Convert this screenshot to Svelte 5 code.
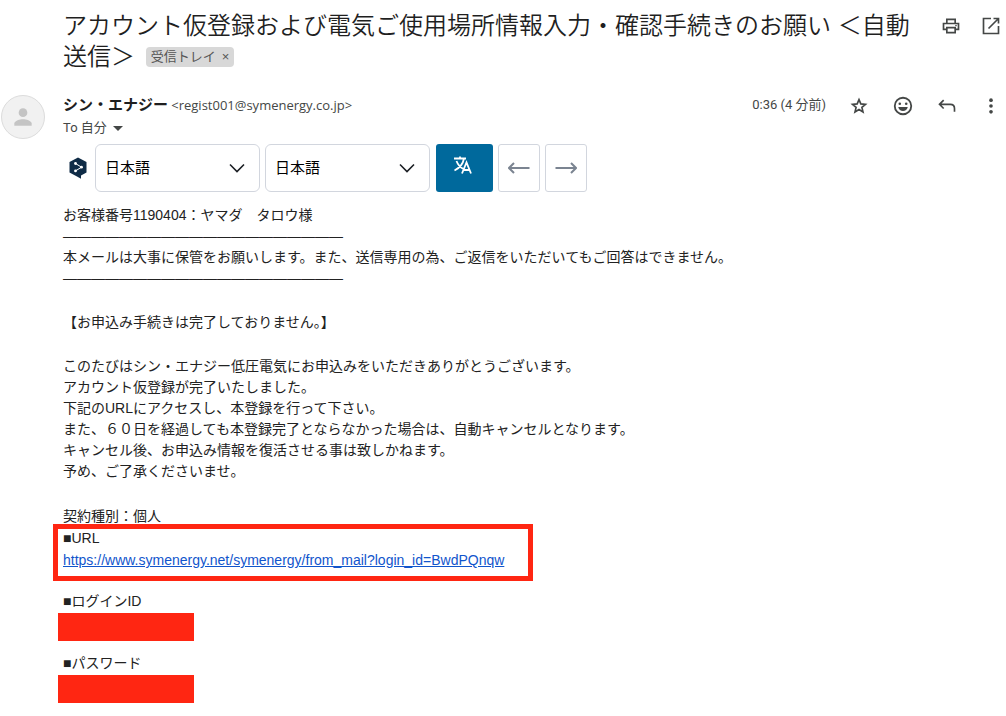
<script>
    let source = "ja";
    let target = "ja";

    const languages = [
        { code: "ja", name: "日本語" },
        { code: "en", name: "英語" },
        { code: "zh", name: "中国語" },
    ];

    const rule = "―".repeat(20);

    // Une liste de lignes par paragraphe
    const paragraphs = [
        [
            "お客様番号1190404：ヤマダ　タロウ様",
            rule,
            "本メールは大事に保管をお願いします。また、送信専用の為、ご返信をいただいてもご回答はできません。",
            rule,
        ],
        ["【お申込み手続きは完了しておりません。】"],
        [
            "このたびはシン・エナジー低圧電気にお申込みをいただきありがとうございます。",
            "アカウント仮登録が完了いたしました。",
            "下記のURLにアクセスし、本登録を行って下さい。",
            "また、６０日を経過しても本登録完了とならなかった場合は、自動キャンセルとなります。",
            "キャンセル後、お申込み情報を復活させる事は致しかねます。",
            "予め、ご了承くださいませ。",
        ],
    ];

    const url = "https://www.symenergy.net/symenergy/from_mail?login_id=BwdPQnqw";
</script>

<main>
    <header class="subject">
        <div class="title">
            <h1>アカウント仮登録および電気ご使用場所情報入力・確認手続きのお願い ＜自動送信＞</h1>
            <div class="tag"><span>受信トレイ</span><button aria-label="ラベルを削除">×</button></div>
        </div>
        <div class="actions">
            <button aria-label="印刷">
                <svg viewBox="0 0 24 24"><path d="M18 8V3H6v5H2v9h4v4h12v-4h4V8h-4zM8 5h8v3H8V5zm8 14H8v-4h8v4zm4-4h-2v-2H6v2H4v-5h16v5z" /><circle cx="18" cy="11.500" r="1" /></svg>
            </button>
            <button aria-label="新しいウィンドウで開く">
                <svg viewBox="0 0 24 24"><path class="line" d="M12 3H3v18h18v-9M15 3h6v6M21 3L9 15" /></svg>
            </button>
        </div>
    </header>

    <article>
        <div class="avatar">
            <svg viewBox="0 0 24 24"><circle cx="12" cy="8" r="4" /><path d="M12 14c-2.670 0-8 1.340-8 4v2h16v-2c0-2.660-5.330-4-8-4z" /></svg>
        </div>

        <div class="content">
            <div class="sender">
                <div class="from">
                    <div><b>シン・エナジー</b> <span class="mail">&lt;regist001@symenergy.co.jp&gt;</span></div>
                    <button class="to">To 自分 <i></i></button>
                </div>
                <time>0:36 (4 分前)</time>
                <div class="actions">
                    <button aria-label="スター">
                        <svg viewBox="0 0 24 24"><path class="line" d="M12 4.300l2.200 5.200 5.600.5-4.300 3.700 1.300 5.500-4.800-2.900-4.800 2.900 1.300-5.500L4.200 10l5.600-.5z" /></svg>
                    </button>
                    <button aria-label="リアクションを追加">
                        <svg class="big" viewBox="0 0 24 24"><circle class="line" cx="12" cy="12" r="9" /><circle cx="8.500" cy="9.500" r="1.400" /><circle cx="15.500" cy="9.500" r="1.400" /><path d="M6.800 13.200h10.400c-.6 2.700-2.700 4.300-5.200 4.300s-4.600-1.600-5.200-4.300z" /></svg>
                    </button>
                    <button aria-label="返信">
                        <svg viewBox="0 0 24 24"><path class="line" d="M8 5L3 10l5 5M3 10h13c3 0 5 2 5 5v4" /></svg>
                    </button>
                    <button aria-label="その他">
                        <svg viewBox="0 0 24 24"><circle cx="12" cy="5" r="2.200" /><circle cx="12" cy="12" r="2.200" /><circle cx="12" cy="19" r="2.200" /></svg>
                    </button>
                </div>
            </div>

            <div class="translate">
                <svg class="logo" viewBox="0 0 18 22"><path class="hex" d="M9 0.500L17.500 5v10.500L12 18.500v3.200L8 19.500.5 15.500V5z" /><path class="net" d="M6.500 6.500l6 3.700-6 3.700" /><circle cx="6.500" cy="6.500" r="1.400" /><circle cx="12.500" cy="10.200" r="1.400" /><circle cx="6.500" cy="13.900" r="1.400" /></svg>
                <label>
                    <select aria-label="原文の言語" bind:value={source}>
                        {#each languages as l}
                            <option value={l.code}>{l.name}</option>
                        {/each}
                    </select>
                    <svg viewBox="0 0 16 10"><path d="M1 1.500l7 7 7-7" /></svg>
                </label>
                <label>
                    <select aria-label="訳文の言語" bind:value={target}>
                        {#each languages as l}
                            <option value={l.code}>{l.name}</option>
                        {/each}
                    </select>
                    <svg viewBox="0 0 16 10"><path d="M1 1.500l7 7 7-7" /></svg>
                </label>
                <button class="run" aria-label="翻訳">
                    <svg viewBox="0 0 18 18"><path d="M0 2.500h12M6 0.500v2M2.500 5c1.500 4 4 6.500 7 8M10 2.500C9 8 5.500 12 .5 14.500M8 17.500l4.500-11 4.500 11M9.500 14h6" /></svg>
                </button>
                <button class="arrow" aria-label="戻る">
                    <svg viewBox="0 0 22 12"><path d="M21.500 6H1M6 1L1 6l5 5" /></svg>
                </button>
                <button class="arrow" aria-label="進む">
                    <svg viewBox="0 0 22 12"><path d="M.5 6H21M16 1l5 5-5 5" /></svg>
                </button>
            </div>

            <div class="body">
                {#each paragraphs as lines}
                    <p>
                        {#each lines as line}
                            {line}<br />
                        {/each}
                    </p>
                {/each}
                <p class="marked">
                    契約種別：個人<br />
                    ■URL<br />
                    <a href={url}>{url}</a>
                    <span class="frame"></span>
                </p>
                <p>■ログインID</p>
                <div class="hidden"></div>
                <p>■パスワード</p>
                <div class="hidden"></div>
            </div>
        </div>
    </article>
</main>

<style>
    :global(body) {
        background: #fff;
        color: #202124;
        font-family: "Liberation Sans", "Noto Sans CJK JP", sans-serif;
    }
    main {
        padding: 10px 3px 10px 0;
    }
    button {
        padding: 0;
        border: none;
        background: none;
        color: inherit;
        font: inherit;
        cursor: pointer;
    }
    svg {
        display: block;
        flex: none;
        width: 20px;
        height: 20px;
        fill: #444746;
    }
    .big {
        width: 22px;
        height: 22px;
    }
    .line {
        fill: none;
        stroke: #444746;
        stroke-width: 2;
    }
    .subject {
        display: flex;
        align-items: flex-start;
        justify-content: space-between;
        gap: 20px;
        padding-left: 63px;
    }
    .title {
        line-height: 31px;
        font-size: 24px;
    }
    h1 {
        display: inline;
        margin: 0;
        font-size: 24px;
        font-weight: 350;
        color: #1f1f1f;
    }
    .tag {
        display: inline-flex;
        align-items: center;
        gap: 6px;
        height: 20px;
        margin: 6px 0 0 4px;
        padding: 0 5px;
        border-radius: 4px;
        background: #d8d8d8;
        color: #555;
        font-size: 13px;
        line-height: 20px;
        vertical-align: top;
    }
    .actions {
        display: flex;
        gap: 20px;
    }
    .subject .actions {
        gap: 16px;
    }
    .actions button {
        display: flex;
        align-items: center;
        justify-content: center;
        width: 24px;
        height: 32px;
    }
    article {
        display: flex;
        margin-top: 23px;
    }
    .avatar {
        display: flex;
        align-items: center;
        justify-content: center;
        flex: none;
        box-sizing: border-box;
        width: 44px;
        height: 44px;
        margin: 0 18px 0 1px;
        border: 1px solid #dcdcdc;
        border-radius: 50%;
        background: #f1f1f1;
    }
    .avatar svg {
        width: 26px;
        height: 26px;
        fill: #c4c4c4;
    }
    .content {
        flex: 1;
        min-width: 0;
    }
    .sender {
        display: flex;
        align-items: flex-start;
        height: 44px;
        line-height: 20px;
        font-family: Roboto, "Noto Sans CJK JP", sans-serif;
        font-size: 13px;
        color: #444746;
    }
    .from {
        flex: 1;
    }
    b {
        font-size: 15px;
        color: #1f1f1f;
    }
    .mail {
        font-family: "Open Sans", sans-serif;
    }
    .to {
        display: flex;
        align-items: center;
        gap: 6px;
        height: 24px;
    }
    .to i {
        border: 5px solid transparent;
        border-top-color: #444746;
        border-bottom: none;
    }
    time {
        margin-right: 21px;
    }
    .sender .actions button {
        height: 22px;
    }
    .translate {
        display: flex;
        align-items: center;
        gap: 5px;
        margin-top: 5px;
        padding-left: 6px;
    }
    .logo {
        width: 18px;
        height: 22px;
        margin-right: 3px;
        fill: #fff;
    }
    .hex {
        fill: #0f2b46;
    }
    .net {
        fill: none;
        stroke: #fff;
    }
    label {
        position: relative;
    }
    select {
        appearance: none;
        box-sizing: border-box;
        display: block;
        width: 165px;
        height: 48px;
        padding: 0 40px 4px 9px;
        border: 1px solid #d2d6de;
        border-radius: 6px;
        background: #fff;
        color: #000;
        font-family: "Noto Sans CJK JP", sans-serif;
        font-size: 15px;
    }
    label svg {
        position: absolute;
        top: 19px;
        right: 15px;
        width: 16px;
        height: 10px;
        fill: none;
        stroke: #1b1f24;
        stroke-width: 1.6;
        pointer-events: none;
    }
    .run,
    .arrow {
        display: flex;
        align-items: center;
        justify-content: center;
        box-sizing: border-box;
        width: 42px;
        height: 48px;
        border: 1px solid #d2d6de;
        border-radius: 3px;
    }
    .run {
        width: 57px;
        margin-left: 1px;
        padding: 0 4px 6px 0;
        border: none;
        background: #00699c;
    }
    .run svg {
        width: 18px;
        height: 18px;
        fill: none;
        stroke: #fff;
        stroke-width: 1.8;
    }
    .arrow svg {
        width: 22px;
        height: 12px;
        fill: none;
        stroke: #7b8491;
        stroke-width: 2;
    }
    .body {
        margin-top: 13px;
        font-size: 14px;
        line-height: 21px;
        color: #222;
    }
    p {
        margin: 0 0 23px;
    }
    a {
        color: #1155cc;
    }
    .marked {
        position: relative;
        margin-bottom: 20px;
        line-height: 22px;
    }
    /* cadre rouge autour du lien */
    .frame {
        position: absolute;
        top: 19px;
        left: -10px;
        box-sizing: border-box;
        width: 480px;
        height: 57px;
        border: 5px solid #ff2612;
        pointer-events: none;
    }
    .hidden {
        width: 136px;
        height: 28px;
        margin: -22px 0 12px -5px;
        background: #ff2612;
    }
</style>
